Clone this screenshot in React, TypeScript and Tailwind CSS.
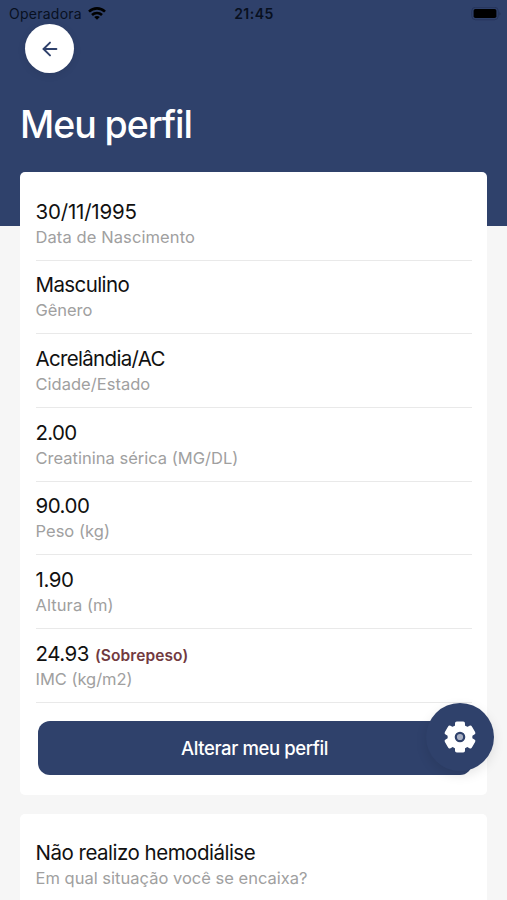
import { ArrowLeft } from "lucide-react"

type Field = {
    value: string
    label: string
    note?: string
    // per-text tracking
    valueClass: string
    labelClass: string
}

const fields: Field[] = [
    { value: "30/11/1995", label: "Data de Nascimento", valueClass: "tracking-[-0.2px]", labelClass: "tracking-[0.1px]" },
    { value: "Masculino", label: "Gênero", valueClass: "tracking-[-0.6px]", labelClass: "tracking-[-0.05px]" },
    { value: "Acrelândia/AC", label: "Cidade/Estado", valueClass: "tracking-[-0.68px]", labelClass: "tracking-[0.02px]" },
    { value: "2.00", label: "Creatinina sérica (MG/DL)", valueClass: "tracking-[-0.7px]", labelClass: "tracking-[0.01px]" },
    { value: "90.00", label: "Peso (kg)", valueClass: "tracking-[-0.5px]", labelClass: "tracking-[0.03px]" },
    { value: "1.90", label: "Altura (m)", valueClass: "tracking-[-0.4px]", labelClass: "tracking-[0.08px]" },
    { value: "24.93", label: "IMC (kg/m2)", note: "(Sobrepeso)", valueClass: "tracking-[-0.5px]", labelClass: "tracking-[-0.03px]" },
]

function StatusBar() {
    return (
        <div className="grid h-6 grid-cols-3 items-center pt-1 pl-[9px] pr-[6px] text-[#08101f]">
            <div className="flex items-center gap-[6px]">
                <span className="text-[14px] leading-5 tracking-[0.25px]">Operadora</span>
                <svg width="18" height="14" viewBox="0 0 18 14" fill="none" stroke="#000" strokeWidth="2.6">
                    <path d="M1 4.6C5.5 0.3 12.5 0.3 17 4.6" />
                    <path d="M4 8C6.8 5.3 11.2 5.3 14 8" />
                    <path d="M9 12.8L6.2 10.1C7.8 8.7 10.2 8.7 11.8 10.1Z" fill="#000" stroke="none" />
                </svg>
            </div>
            <span className="pr-[2px] text-center text-[14px] font-semibold leading-5 tracking-[0.5px]">21:45</span>
            <svg className="justify-self-end" width="30" height="14" viewBox="0 0 30 14">
                <rect x="0.7" y="0.2" width="26.6" height="12.6" rx="4" fill="none" stroke="#26345a" strokeWidth="1" />
                <rect x="2.6" y="2" width="22.8" height="9" rx="1.8" fill="#000" />
                <path d="M28.6 4.4Q30 6.4 28.6 8.4Z" fill="#202c4b" />
            </svg>
        </div>
    )
}

function GearIcon() {
    return (
        <svg width="34" height="34" viewBox="-17 -17 34 34" fill="#fff">
            <circle r="12.4" />
            <rect x="-5" y="-15.6" width="10" height="31.2" rx="1.8" />
            <rect x="-5" y="-15.6" width="10" height="31.2" rx="1.8" transform="rotate(60)" />
            <rect x="-5" y="-15.6" width="10" height="31.2" rx="1.8" transform="rotate(120)" />
            <circle r="4.2" fill="#a9b0c3" stroke="#2f416b" strokeWidth="2.2" />
        </svg>
    )
}

function FieldRow({ field }: { field: Field }) {
    return (
        <div className="h-[73.7px] border-b border-[#e9e9e9] pt-[10.5px]">
            <p className={`h-[27px] text-[20.5px] leading-[28px] text-[#111] ${field.valueClass}`}>
                {field.value}
                {field.note && (
                    <span className="ml-[6px] text-[15.5px] font-semibold leading-none tracking-[0.1px] text-[#723a40]">{field.note}</span>
                )}
            </p>
            <p className={`text-[16.5px] leading-6 text-[#a0a0a0] ${field.labelClass}`}>{field.label}</p>
        </div>
    )
}

export default function App() {
    return (
        <div className="relative h-[900px] w-full overflow-hidden bg-[#f6f6f6] font-['Inter','Liberation_Sans',sans-serif]">
            <header className="h-[226px] bg-[#2f416b]">
                <StatusBar />
                <div className="px-[21px]">
                    <button className="ml-1 flex size-[49px] items-center justify-center rounded-full bg-white text-[#2f416b] shadow-[0_2px_8px_rgba(0,0,0,0.08)]">
                        <ArrowLeft size={22} strokeWidth={2.1} />
                    </button>
                    <h1 className="-ml-px mt-[28px] text-[37.5px] font-[450] leading-[48px] tracking-[-1.05px] text-white">Meu perfil</h1>
                </div>
            </header>

            <main className="-mt-[54px] flex flex-col gap-[19px] px-5">
                <section className="h-[623px] rounded-[5px] bg-white px-[15.5px] pt-[15px]">
                    {fields.map((field) => (
                        <FieldRow key={field.label} field={field} />
                    ))}
                    <button className="ml-[2px] mt-[18.5px] h-[54px] w-[434px] rounded-[12px] bg-[#2f416b] pt-[2px] text-[18.5px] font-medium tracking-[-0.4px] text-white">
                        Alterar meu perfil
                    </button>
                </section>

                <section className="h-[120px] rounded-[5px] bg-white px-[15.5px] pt-[25px]">
                    <p className="h-[27px] text-[20.5px] leading-[28px] tracking-[-0.5px] text-[#111]">Não realizo hemodiálise</p>
                    <p className="text-[16.5px] leading-6 tracking-[0.01px] text-[#a0a0a0]">Em qual situação você se encaixa?</p>
                </section>
            </main>

            {/* floating settings button */}
            <button className="absolute left-[426px] top-[703px] flex size-[68px] items-center justify-center rounded-full bg-[#2f416b] shadow-[0_4px_12px_rgba(0,0,0,0.1)]">
                <GearIcon />
            </button>
        </div>
    )
}
